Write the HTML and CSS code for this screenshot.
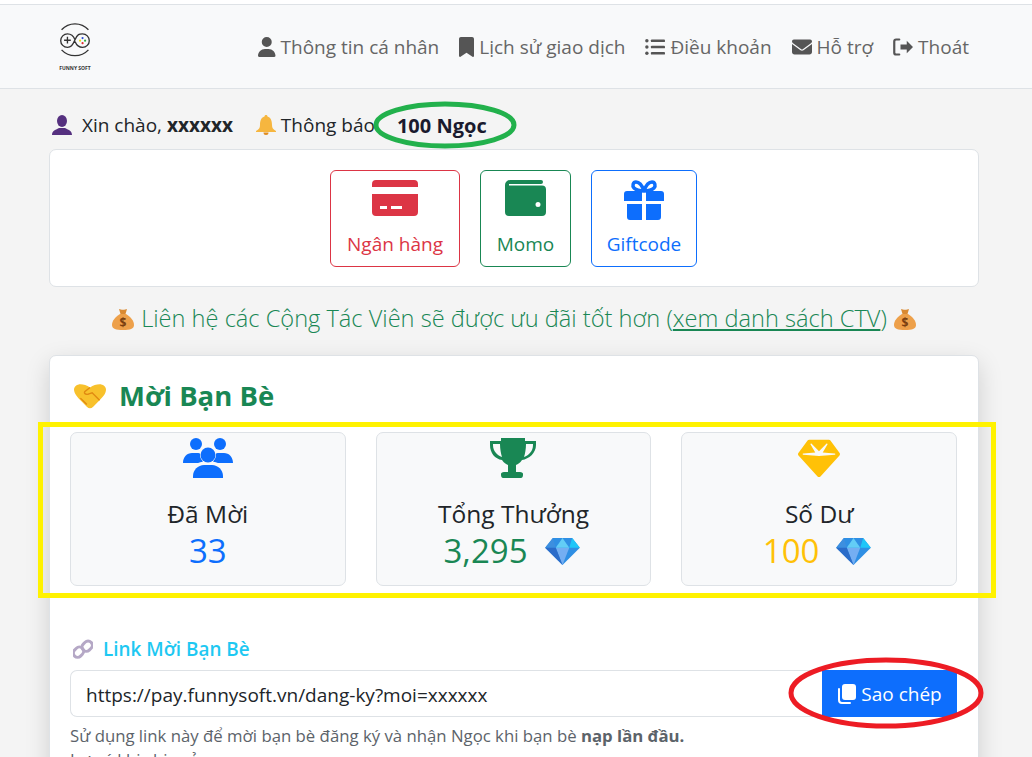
FILE: index.html
```html
<!DOCTYPE html>
<html lang="vi">
<head>
  <meta charset="UTF-8">
  <meta name="viewport" content="width=device-width, initial-scale=1.0">
  <title>Mời Bạn Bè - FunnySoft</title>
  <link rel="stylesheet" href="styles.css">
</head>
<body>
  <nav class="navbar">
    <a class="logo" href="#">
      <svg width="44" height="50" viewBox="0 0 44 50" fill="none" stroke="#333" stroke-width="1.6">
        <path d="M6 8a22 22 0 0 1 32 0"/>
        <path d="M6 32a22 22 0 0 0 32 0"/>
        <path d="M22 20c-2-5-5-7-9-7a7.500 7.500 0 0 0 0 16c4 0 6-2 9-9s5-7 9-7a7.500 7.500 0 0 1 0 16c-4 0-7-2-9-7"/>
        <path d="M9 20.500h8M13 16.500v8"/>
        <circle cx="31" cy="18" r="1.300" fill="#2b4fd6" stroke="none"/>
        <circle cx="28" cy="21" r="1.300" fill="#e8d81e" stroke="none"/>
        <circle cx="34" cy="21" r="1.300" fill="#2fae3e" stroke="none"/>
        <circle cx="31" cy="24" r="1.300" fill="#e02c2c" stroke="none"/>
      </svg>
      <span class="logo-text">FUNNY SOFT</span>
    </a>
    <ul class="nav-links">
      <li><svg class="nav-icon" viewBox="0 0 448 512"><path d="M224 256A128 128 0 1 0 224 0a128 128 0 1 0 0 256zm-45.700 48C79.800 304 0 383.800 0 482.300C0 498.700 13.300 512 29.700 512H418.300c16.400 0 29.700-13.300 29.700-29.700C448 383.800 368.200 304 269.700 304H178.300z"/></svg>Thông tin cá nhân</li>
      <li><svg class="nav-icon" viewBox="0 0 384 512"><path d="M0 48V487.700C0 501.100 10.900 512 24.300 512c5 0 9.900-1.500 14-4.400L192 400 345.700 507.600c4.100 2.900 9 4.400 14 4.400c13.400 0 24.300-10.900 24.300-24.300V48c0-26.500-21.500-48-48-48H48C21.500 0 0 21.500 0 48z"/></svg>Lịch sử giao dịch</li>
      <li><svg class="nav-icon" viewBox="0 0 512 512"><circle cx="48" cy="96" r="44"/><circle cx="48" cy="256" r="44"/><circle cx="48" cy="416" r="44"/><rect x="150" y="62" width="362" height="68" rx="24"/><rect x="150" y="222" width="362" height="68" rx="24"/><rect x="150" y="382" width="362" height="68" rx="24"/></svg>Điều khoản</li>
      <li><svg class="nav-icon" viewBox="0 0 512 512"><path d="M48 64C21.500 64 0 85.500 0 112c0 15.100 7.100 29.300 19.200 38.400L236.800 313.600c11.400 8.500 27 8.500 38.400 0L492.800 150.400c12.100-9.100 19.200-23.300 19.200-38.400c0-26.500-21.500-48-48-48H48zM0 176V384c0 35.300 28.700 64 64 64H448c35.300 0 64-28.700 64-64V176L294.400 339.200c-22.800 17.100-54 17.100-76.800 0L0 176z"/></svg>Hỗ trợ</li>
      <li><svg class="nav-icon" viewBox="0 0 512 512"><path d="M512 256L352 96v96H192v128h160v96z"/><path d="M160 64H80C53 64 32 85 32 112v288c0 27 21 48 48 48h80" fill="none" stroke="#555" stroke-width="56" stroke-linecap="round"/></svg>Thoát</li>
    </ul>
  </nav>

  <main class="container">
    <div class="greeting">
      <svg class="emoji-bust" viewBox="0 0 20 20"><ellipse cx="10" cy="6" rx="5" ry="6" fill="#55307f"/><path d="M0 20c0-4 3-5 7-7h6c4 2 7 3 7 7z" fill="#55307f"/></svg>
      <span class="hello">Xin chào, <b>xxxxxx</b></span>
      <svg class="emoji-bell" viewBox="0 0 20 20"><path d="M10 0c1 0 1.500.7 1.500 1.500C14.500 2.500 16 5 16 10c0 3 1 4.500 4 6v1H0v-1c3-1.500 4-3 4-6 0-5 1.500-7.500 4.500-8.500C8.500.7 9 0 10 0z" fill="#f6b63f"/><path d="M7.500 17.500h5a2.500 2.500 0 0 1-5 0z" fill="#e08c1f"/></svg>
      <span>Thông báo</span>
      <b class="balance">100 Ngọc</b>
    </div>

    <section class="card pay-methods">
      <a class="pay-btn pay-red" href="#">
        <svg width="46" height="36" viewBox="0 0 46 36"><path d="M0 4a4 4 0 0 1 4-4h38a4 4 0 0 1 4 4v3H0zM0 14h46v18a4 4 0 0 1-4 4H4a4 4 0 0 1-4-4zm8 12v3h7v-3zm11 0v3h11v-3z" fill="currentColor" fill-rule="evenodd"/></svg>
        <span>Ngân hàng</span>
      </a>
      <a class="pay-btn pay-green" href="#">
        <svg width="41" height="36" viewBox="0 0 41 36"><path d="M0 5a5 5 0 0 1 5-5h31a2 2 0 0 1 0 4H4v1.500h33a4 4 0 0 1 4 4V32a4 4 0 0 1-4 4H4a4 4 0 0 1-4-4zm33 17a2.500 2.500 0 1 0 0 5 2.500 2.500 0 0 0 0-5z" fill="currentColor" fill-rule="evenodd"/></svg>
        <span>Momo</span>
      </a>
      <a class="pay-btn pay-blue" href="#">
        <svg width="40" height="40" viewBox="0 0 40 40"><g fill="currentColor"><path d="M3 11h15v10H0v-7a3 3 0 0 1 3-3zM22 11h15a3 3 0 0 1 3 3v7H22zM3 24h15v16H6a3 3 0 0 1-3-3zM22 24h15v13a3 3 0 0 1-3 3H22z"/></g><path d="M20 11c-2-6-5-9-8-9s-4 4-2 6 6 3 10 3zm0 0c2-6 5-9 8-9s4 4 2 6-6 3-10 3z" fill="none" stroke="currentColor" stroke-width="3.500"/></svg>
        <span>Giftcode</span>
      </a>
    </section>

    <p class="ctv-note">
      <svg class="emoji-bag" viewBox="0 0 24 24"><path d="M8 2c2 1 6 1 8 0l-1.500 5h-5z" fill="#d98a33"/><path d="M9 7h6c5 3 8 7 8 11 0 4-4 5-11 5S1 22 1 18c0-4 3-8 8-11z" fill="#eda04a"/><text x="12" y="20" class="emoji-bag-sign">$</text></svg>
      Liên hệ các Cộng Tác Viên sẽ được ưu đãi tốt hơn (<a href="#">xem danh sách CTV</a>)
      <svg class="emoji-bag" viewBox="0 0 24 24"><path d="M8 2c2 1 6 1 8 0l-1.500 5h-5z" fill="#d98a33"/><path d="M9 7h6c5 3 8 7 8 11 0 4-4 5-11 5S1 22 1 18c0-4 3-8 8-11z" fill="#eda04a"/><text x="12" y="20" class="emoji-bag-sign">$</text></svg>
    </p>

    <section class="card invite">
      <h2 class="invite-title">
        <svg class="emoji-shake" viewBox="0 0 30 24"><path d="M0 6c0-3 3-5 6-5 3 0 6 1 9 3 3-2 6-3 9-3 3 0 6 2 6 5 0 4-3 7-6 10l-6 6c-2 2-4 2-6 0l-5-5C4 14 0 10 0 6z" fill="#f8c12c"/><path d="M15 4l-5 4c-1 2 2 3 4 2l3-1 7 7M9 17l3 3M6 14l3 3" fill="none" stroke="#e08a12" stroke-width="1.300"/></svg>
        Mời Bạn Bè
      </h2>

      <div class="stats">
        <div class="stat">
          <svg class="stat-icon stat-blue" width="50" height="40" viewBox="0 0 50 40"><g fill="currentColor"><circle cx="13" cy="6" r="6"/><circle cx="37" cy="6" r="6"/><circle cx="25" cy="17" r="7.500"/><path d="M0 25c0-6 4-10 9-10h5c2 0 3 .5 3 .5-.5 3 1 6 3 8-2 .5-4 1-5 1.500zM50 25c0-6-4-10-9-10h-5c-2 0-3 .5-3 .5.500 3-1 6-3 8 2 .5 4 1 5 1.500z"/><path d="M10 40v-2c0-6 5-11 11-11h8c6 0 11 5 11 11v2z"/></g></svg>
          <div class="stat-label">Đã Mời</div>
          <div class="stat-value stat-blue">33</div>
        </div>
        <div class="stat">
          <svg class="stat-icon stat-green" width="46" height="40" viewBox="0 0 46 40"><path d="M11 0h24v3h11v4c0 8-7 14-14 15-2 3-4 4-6 5v7h4c2 0 3 1 3 2v1c0 2-1 3-2 3H13c-1 0-2-1-2-3v-1c0-1 1-2 3-2h4v-7c-2-1-4-2-6-5C5 21 0 15 0 7V3h11zM3 6v1c0 6 4 10 9 12-1-3-2-8-2-13zm40 0h-7c0 5-1 10-2 13 5-2 9-6 9-12z" fill="currentColor" fill-rule="evenodd"/></svg>
          <div class="stat-label">Tổng Thưởng</div>
          <div class="stat-value stat-green">3,295<svg class="gem" viewBox="0 0 36 28"><path d="M8 0h20l8 10-18 18L0 10z" fill="#2f8fe4"/><path d="M11 10h14l-7 18z" fill="#74aef2"/><path d="M18 0l7 10H11z" fill="#63cdf6"/><path d="M28 0l8 10H25z" fill="#1fc6f8"/><path d="M8 0L0 10h11z" fill="#3d8fdf"/><path d="M0 10h11l7 18z" fill="#2b6cc9"/></svg></div>
        </div>
        <div class="stat">
          <svg class="stat-icon stat-yellow" width="42" height="37" viewBox="0 0 512 448"><path transform="translate(0 -24)" d="M116.700 33.800c4.500-6.100 11.700-9.800 19.300-9.800H376c7.600 0 14.800 3.600 19.300 9.800l112 152c6.800 9.200 6.100 21.900-1.500 30.400l-232 256c-4.500 5-11 7.900-17.800 7.900s-13.200-2.900-17.800-7.900l-232-256c-7.700-8.500-8.300-21.200-1.500-30.400l112-152zm38.500 39.800c-3.300 2.500-4.200 7-2.100 10.500l57.400 95.600L63.300 192c-4.100 .3-7.300 3.800-7.300 8s3.200 7.600 7.300 8l192 16c.4 0 .9 0 1.300 0l192-16c4.100-.3 7.300-3.800 7.300-8s-3.200-7.600-7.300-8L301.500 179.800l57.400-95.600c2.100-3.500 1.200-8-2.100-10.500s-7.900-2.200-10.900 .7L256 164.800 165.900 74.300c-2.900-3-7.600-3.200-10.900-.7z" fill="currentColor"/></svg>
          <div class="stat-label">Số Dư</div>
          <div class="stat-value stat-yellow">100<svg class="gem" viewBox="0 0 36 28"><path d="M8 0h20l8 10-18 18L0 10z" fill="#2f8fe4"/><path d="M11 10h14l-7 18z" fill="#74aef2"/><path d="M18 0l7 10H11z" fill="#63cdf6"/><path d="M28 0l8 10H25z" fill="#1fc6f8"/><path d="M8 0L0 10h11z" fill="#3d8fdf"/><path d="M0 10h11l7 18z" fill="#2b6cc9"/></svg></div>
        </div>
      </div>

      <div class="link-label">
        <svg class="emoji-link" viewBox="0 0 20 20" fill="none" stroke="#b5a8c6" stroke-width="3"><rect x="10" y="1.500" width="8.500" height="11" rx="4.200" transform="rotate(45 14 7)"/><rect x="1.500" y="8" width="8.500" height="11" rx="4.200" transform="rotate(45 6 13)"/></svg>
        Link Mời Bạn Bè
      </div>
      <div class="input-group">
        <input class="link-input" type="text" value="https://pay.funnysoft.vn/dang-ky?moi=xxxxxx" readonly>
        <button class="copy-btn">
          <svg width="20" height="20" viewBox="0 0 20 20"><path d="M8 0h8a3 3 0 0 1 3 3v10a3 3 0 0 1-3 3H8a3 3 0 0 1-3-3V3a3 3 0 0 1 3-3z" fill="#fff"/><path d="M2 5v11a3 3 0 0 0 3 3h8" fill="none" stroke="#fff" stroke-width="2" stroke-linecap="round"/></svg>
          Sao chép
        </button>
      </div>
      <p class="help-text">Sử dụng link này để mời bạn bè đăng ký và nhận Ngọc khi bạn bè <b>nạp lần đầu.</b></p>
      <p class="help-text">Lưu ý khi chia sẻ</p>
    </section>
  </main>

  <svg class="marks" width="1032" height="757" viewBox="0 0 1032 757" fill="none">
    <ellipse cx="445" cy="125" rx="69" ry="21" stroke="#22b14c" stroke-width="5"/>
    <rect x="40.500" y="424.500" width="953" height="171" stroke="#fff200" stroke-width="5"/>
    <ellipse cx="886" cy="693" rx="95" ry="33" stroke="#ed1c24" stroke-width="5"/>
  </svg>
</body>
</html>
```

FILE: styles.css
```css
html, body {
  height: 757px;
  overflow: hidden;
}
body {
  margin: 0;
  padding-top: 4px;
  box-sizing: border-box;
  background-color: #f4f4f4;
  background-image: linear-gradient(#fff, #fff);
  background-size: 100% 4px;
  background-repeat: no-repeat;
  color: #212529;
  font-family: "Open Sans", "Noto Sans", sans-serif;
  font-size: 19px;
  position: relative;
}
a {
  text-decoration: none;
}
p {
  margin: 0;
}
.navbar {
  display: flex;
  align-items: center;
  justify-content: space-between;
  height: 85px;
  box-sizing: border-box;
  padding: 0 63px 0 56px;
  background-color: #f8f9fa;
  border-top: 1px solid #dee2e6;
  border-bottom: 1px solid #dee2e6;
}
.logo {
  display: flex;
  flex-direction: column;
  align-items: center;
  width: 38px;
}
.logo svg {
  width: 38px;
  height: 42px;
}
.logo-text {
  color: #333;
  font-size: 5px;
  font-weight: 700;
  white-space: nowrap;
}
.nav-links {
  display: flex;
  gap: 20px;
  list-style: none;
  margin: 0;
  padding: 0;
  color: #666;
}
.nav-links li {
  display: flex;
  align-items: center;
  gap: 5px;
}
.nav-icon {
  height: 20px;
  width: auto;
  fill: #555;
}
.container {
  width: 930px;
  margin-left: 49px;
}
.greeting {
  display: flex;
  align-items: center;
  height: 60px;
  box-sizing: border-box;
  padding: 12px 0 0 3px;
}
.greeting svg {
  width: 20px;
  height: 20px;
}
.hello {
  margin: 0 23px 0 10px;
}
.emoji-bell {
  margin-right: 5px;
}
.balance {
  margin-left: 22px;
  color: #1a1a2e;
  font-size: 20px;
}
.card {
  background-color: #fff;
  border: 1px solid #dee2e6;
  border-radius: 7px;
  box-sizing: border-box;
}
.pay-methods {
  display: flex;
  justify-content: center;
  gap: 20px;
  height: 138px;
  padding: 20px 1px 0 0;
}
.pay-btn {
  display: flex;
  flex-direction: column;
  align-items: center;
  justify-content: space-between;
  height: 97px;
  padding: 9px 5px 9px;
  box-sizing: border-box;
  border: 1px solid currentColor;
  border-radius: 6px;
  font-size: 19px;
}
.pay-red { color: #dc3545; width: 130px; }
.pay-green { color: #198754; width: 91px; }
.pay-blue { color: #0d6efd; width: 106px; }
.ctv-note {
  height: 68px;
  box-sizing: border-box;
  padding-top: 14px;
  color: #198754;
  font-size: 23.600px;
  font-weight: 300;
  line-height: 34px;
  text-align: center;
  white-space: nowrap;
}
.ctv-note a {
  color: #198754;
  text-decoration: underline;
}
.emoji-bag {
  width: 24px;
  height: 24px;
  vertical-align: -4px;
}
.emoji-bag-sign {
  fill: #7a3f10;
  font-size: 12px;
  font-weight: 700;
  text-anchor: middle;
}
.invite {
  height: 500px;
  padding: 0 21px 0 20px;
  box-shadow: 0 8px 24px rgba(0,0,0,0.15);
}
.invite-title {
  display: flex;
  align-items: center;
  gap: 13px;
  height: 76px;
  box-sizing: border-box;
  margin: 0;
  padding: 3px 0 0 4px;
  color: #198754;
  font-size: 27.500px;
  font-weight: 700;
}
.emoji-shake {
  width: 32px;
  height: 26px;
}
.stats {
  display: grid;
  grid-template-columns: repeat(3, 1fr);
  gap: 30px;
}
.stat {
  display: flex;
  flex-direction: column;
  align-items: center;
  height: 154px;
  padding-top: 5px;
  box-sizing: border-box;
  background-color: #f8f9fa;
  border: 1px solid #dee2e6;
  border-radius: 7px;
}
.stat-icon {
  height: 40px;
  margin-bottom: 21px;
}
.stat-label {
  font-size: 24.500px;
  font-weight: 500;
  line-height: 30px;
}
.stat-value {
  display: flex;
  align-items: center;
  gap: 17px;
  font-size: 33px;
  font-weight: 500;
  line-height: 44px;
}
.stat-blue { color: #0d6efd; }
.stat-green { color: #198754; }
.stat-yellow { color: #ffc107; }
.gem {
  width: 35px;
  height: 27px;
  margin-right: 4px;
}
.link-label {
  display: flex;
  align-items: center;
  gap: 10px;
  margin-top: 50px;
  padding-left: 3px;
  color: #1ec8f2;
  font-size: 18.900px;
  font-weight: 600;
  line-height: 26px;
}
.emoji-link {
  width: 20px;
  height: 20px;
}
.input-group {
  display: flex;
  margin-top: 8px;
}
.link-input {
  flex: 1;
  height: 47px;
  padding: 2px 15px 0;
  box-sizing: border-box;
  border: 1px solid #dee2e6;
  border-right: none;
  border-radius: 7px 0 0 7px;
  background-color: #fff;
  color: #212529;
  font-family: inherit;
  font-size: 19px;
}
.copy-btn {
  display: flex;
  align-items: center;
  justify-content: center;
  gap: 4px;
  width: 135px;
  height: 47px;
  padding-top: 2px;
  border: none;
  background-color: #0d6efd;
  color: #fff;
  font-family: inherit;
  font-size: 19px;
}
.help-text {
  margin-top: 7px;
  color: #5c636a;
  font-size: 16.750px;
  line-height: 24px;
}
.help-text + .help-text {
  margin-top: 0;
}
.marks {
  position: absolute;
  top: 0;
  left: 0;
}
```
